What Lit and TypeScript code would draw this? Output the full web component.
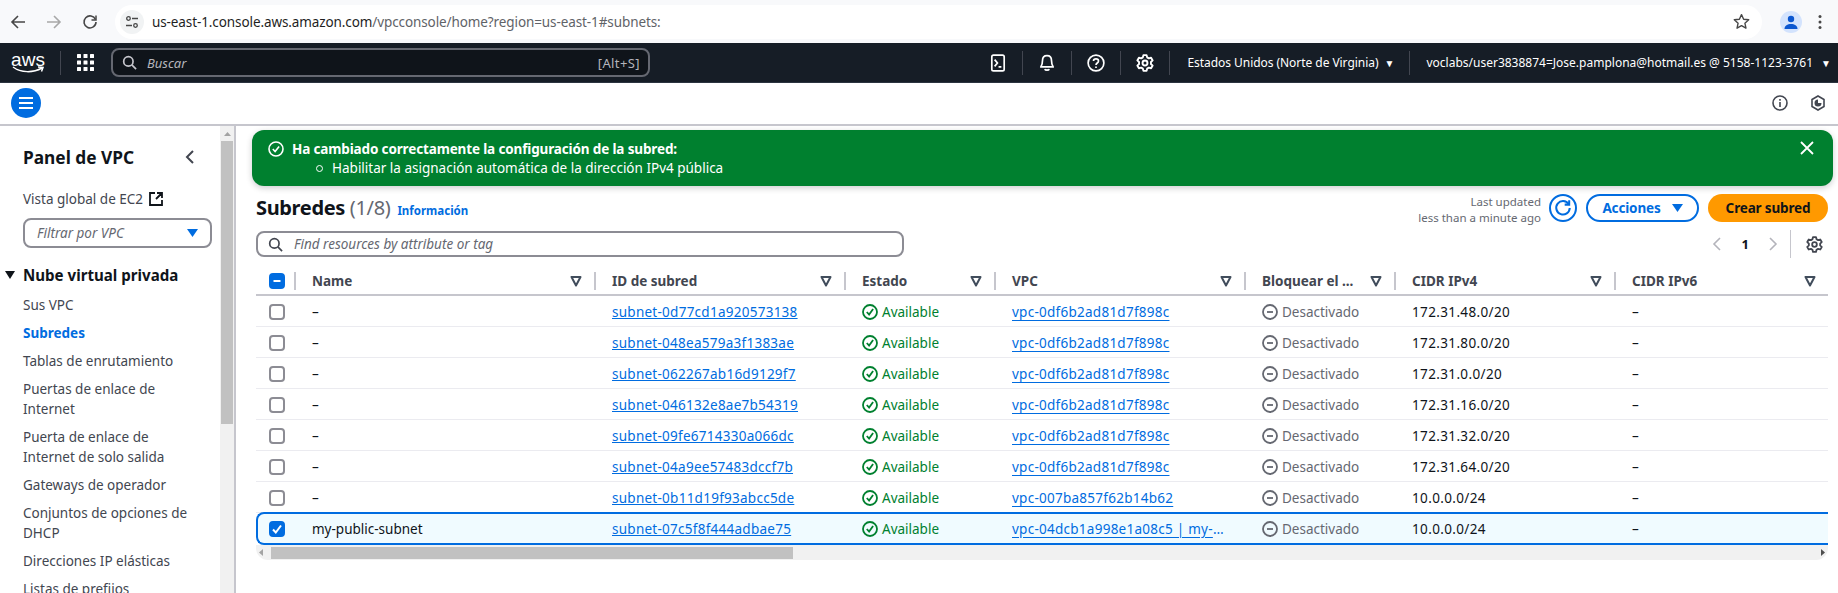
import { LitElement, html, svg, css } from 'lit';
import { customElement } from 'lit/decorators.js';

const gear = html`<svg viewBox="0 0 16 16" fill="none" stroke="currentColor" stroke-width="1.7" stroke-linejoin="round"><path d="M6.6 1h2.800l.5 2 1.500.9 2-.6 1.400 2.400-1.500 1.400v1.800l1.500 1.400-1.400 2.400-2-.6-1.500.9-.5 2H6.600l-.5-2-1.500-.9-2 .6-1.400-2.400 1.500-1.400V7.100L1.200 5.700l1.400-2.400 2 .6 1.500-.9z"/><circle cx="8" cy="8" r="2.200"/></svg>`;
const filterIcon = html`<svg class="filter" viewBox="0 0 12 12"><path d="M1.500 2h9L6 10.500z" fill="none" stroke="#414d5c" stroke-width="2" stroke-linejoin="round"/></svg>`;
const checkCircle = html`<svg class="stat" viewBox="0 0 16 16" fill="none" stroke="#00802f" stroke-width="1.800"><circle cx="8" cy="8" r="7"/><path d="M4.800 8l2.300 2.600 4-5.600"/></svg>`;
const minusCircle = html`<svg class="stat" viewBox="0 0 16 16" fill="none" stroke="#656871" stroke-width="1.800"><circle cx="8" cy="8" r="7"/><path d="M5 8h6"/></svg>`;
const searchIcon = html`<svg class="search-ic" viewBox="0 0 16 16" fill="none" stroke="currentColor" stroke-width="1.800"><circle cx="6.800" cy="6.800" r="5"/><path d="M10.500 10.500L15 15"/></svg>`;

interface Row {
  name: string;
  id: string;
  vpc: string;
  cidr: string;
}

const ROWS: Row[] = [
  { name: '–', id: 'subnet-0d77cd1a920573138', vpc: 'vpc-0df6b2ad81d7f898c', cidr: '172.31.48.0/20' },
  { name: '–', id: 'subnet-048ea579a3f1383ae', vpc: 'vpc-0df6b2ad81d7f898c', cidr: '172.31.80.0/20' },
  { name: '–', id: 'subnet-062267ab16d9129f7', vpc: 'vpc-0df6b2ad81d7f898c', cidr: '172.31.0.0/20' },
  { name: '–', id: 'subnet-046132e8ae7b54319', vpc: 'vpc-0df6b2ad81d7f898c', cidr: '172.31.16.0/20' },
  { name: '–', id: 'subnet-09fe6714330a066dc', vpc: 'vpc-0df6b2ad81d7f898c', cidr: '172.31.32.0/20' },
  { name: '–', id: 'subnet-04a9ee57483dccf7b', vpc: 'vpc-0df6b2ad81d7f898c', cidr: '172.31.64.0/20' },
  { name: '–', id: 'subnet-0b11d19f93abcc5de', vpc: 'vpc-007ba857f62b14b62', cidr: '10.0.0.0/24' },
  { name: 'my-public-subnet', id: 'subnet-07c5f8f444adbae75', vpc: 'vpc-04dcb1a998e1a08c5 | my-vpc', cidr: '10.0.0.0/24' },
];

const HEADERS = ['Name', 'ID de subred', 'Estado', 'VPC', 'Bloquear el ...', 'CIDR IPv4', 'CIDR IPv6'];

@customElement('app-root')
export class AppRoot extends LitElement {
  static styles = css`
    :host {
      display: block;
      width: 1838px;
      height: 593px;
      overflow: hidden;
      background: #fff;
      font-family: 'Noto Sans', sans-serif;
      font-size: 13.5px;
      color: #0f141a;
    }
    svg { display: block; flex: none; }

    /* browser chrome */
    .chrome {
      height: 43px;
      box-sizing: border-box;
      background: #f8f9fb;
      display: flex;
      align-items: center;
      color: #474747;
    }
    .chrome-btn { width: 36px; display: flex; justify-content: center; }
    .chrome-btn svg { width: 16px; height: 16px; }
    .pill {
      margin-left: 7px;
      width: 1647px;
      height: 34px;
      background: #fff;
      border-radius: 17px;
      display: flex;
      align-items: center;
      box-sizing: border-box;
      padding: 0 12px 0 5px;
    }
    .tune {
      width: 24px; height: 24px; border-radius: 50%;
      background: #f1f3f4;
      display: flex; align-items: center; justify-content: center;
      margin-right: 8px;
    }
    .tune svg { width: 14px; height: 14px; }
    .url { font-size: 13.500px; color: #1f1f1f; letter-spacing: -0.1px; flex: 1; }
    .url span { color: #5f6368; }
    .star { width: 17px; height: 17px; }
    .avatar {
      margin-left: 18px;
      width: 22px; height: 22px; border-radius: 50%;
      background: #d3e3fd;
      display: flex; align-items: center; justify-content: center;
    }
    .avatar svg { width: 16px; height: 16px; }
    .dots { margin-left: 16px; width: 4px; height: 16px; }

    /* aws top nav */
    .topnav {
      height: 40px;
      background: #161d26;
      border-bottom: 1px solid #2c3440;
      box-sizing: border-box;
      display: flex;
      align-items: center;
      color: #fff;
      font-size: 12px;
    }
    .logo {
      width: 32px;
      margin-left: 12px;
      display: flex;
      flex-direction: column;
      align-items: center;
      line-height: 15px;
      font-family: 'Liberation Sans', sans-serif;
      font-size: 19px;
    }
    .logo svg { width: 32px; height: 7px; margin-top: -1px; }
    .vsep { width: 1px; height: 24px; background: #424650; flex: none; }
    .logo + .vsep { margin-left: 16px; }
    .apps { width: 17px; height: 17px; margin: 0 17px 0 16px; }
    .nav-search {
      width: 539px;
      height: 29px;
      box-sizing: border-box;
      background: #0f141a;
      border: 2px solid #656871;
      border-radius: 8px;
      display: flex;
      align-items: center;
      padding: 0 8px;
      color: #b4b4bb;
      font-size: 13px;
    }
    .nav-search .search-ic { width: 15px; height: 15px; margin: 0 10px 0 1px; color: #c6c6cd; }
    .nav-search em { flex: 1; }
    .nav-search span { letter-spacing: 0.4px; }
    .nav-right { margin-left: auto; display: flex; align-items: center; padding-right: 7px; }
    .nav-ic { width: 48px; display: flex; justify-content: center; }
    .nav-ic svg { width: 18px; height: 18px; }
    .nav-text { display: flex; align-items: center; gap: 6px; white-space: nowrap; }
    .nav-text.region { margin: 0 17px 0 17px; width: 205px; }
    .nav-text.acct { margin-left: 16px; gap: 8px; }
    .nav-text i { font-style: normal; font-size: 10px; }
    .nav-text.acct span { letter-spacing: 0; }
    .nav-text.region span { letter-spacing: -0.05px; }

    /* sub bar */
    .subbar {
      height: 43px;
      box-sizing: border-box;
      border-bottom: 2px solid #c6c6cd;
      display: flex;
      align-items: center;
      padding: 0 12px 2px 11px;
      color: #424650;
    }
    .menu {
      width: 30px; height: 30px; border-radius: 50%;
      background: #006ce0;
      display: flex; align-items: center; justify-content: center;
      margin-right: auto;
    }
    .menu svg { width: 16px; height: 16px; }
    .sub-ic { width: 16px; height: 16px; margin-left: 22px; }

    /* page */
    .page { display: flex; height: 467px; overflow: hidden; }
    .side {
      width: 236px;
      flex: none;
      box-sizing: border-box;
      border-right: 2px solid #c6c6cd;
      display: flex;
      overflow: hidden;
    }
    .side-body { width: 220px; flex: none; padding: 18px 0 0 23px; box-sizing: border-box; color: #424650; }
    .side-head {
      display: flex;
      align-items: center;
      justify-content: space-between;
      padding-right: 24px;
      font-size: 17.300px;
      font-weight: 700;
      color: #0f141a;
      height: 26px;
    }
    .side-head svg { width: 12px; height: 14px; }
    .ec2 { display: flex; align-items: center; gap: 6px; margin-top: 19px; height: 20px; }
    .ec2 svg { width: 14px; height: 14px; }
    .side-filter {
      width: 189px;
      height: 30px;
      box-sizing: border-box;
      border: 2px solid #8c8c94;
      border-radius: 8px;
      margin-top: 9px;
      display: flex;
      align-items: center;
      justify-content: space-between;
      padding: 0 12px;
      font-style: italic;
      color: #656871;
    }
    .tri { width: 11px; height: 8px; }
    .side-section {
      display: flex;
      align-items: center;
      margin: 15px 0 0 -18px;
      font-size: 15.100px;
      font-weight: 700;
      color: #0f141a;
      height: 24px;
    }
    .side-section svg { width: 10px; height: 8px; margin-right: 8px; }
    .side-list { margin-top: 8px; display: flex; flex-direction: column; gap: 8px; line-height: 20px; width: 175px; }
    .side-list .on { color: #006ce0; font-weight: 700; }
    .vbar { width: 14px; flex: none; background: #f1f1f1; padding-top: 15px; box-sizing: border-box; }
    .vbar .thumb { width: 12px; margin-left: 1px; height: 283px; background: #c1c1c1; }
    .vbar .up { width: 7px; height: 4px; margin: -9px auto 5px; }

    /* content */
    .content { flex: 1; min-width: 0; padding: 4px 5px 0 16px; }
    .flash {
      height: 56px;
      box-sizing: border-box;
      background: #00802f;
      color: #fff;
      border-radius: 12px;
      box-shadow: 0 2px 6px rgba(0, 7, 22, 0.2);
      display: flex;
      padding: 10px 19px 0 16px;
      width: 1581px;
    }
    .flash .ok { width: 16px; height: 16px; margin: 1px 8px 0 0; }
    .flash b { display: block; line-height: 18px; letter-spacing: -0.14px; }
    .flash .li { display: flex; align-items: center; line-height: 20px; }
    .flash .li::before {
      content: '';
      width: 5px; height: 5px;
      border: 1px solid #fff;
      border-radius: 50%;
      margin: 0 9px 0 24px;
    }
    .flash .grow { flex: 1; }
    .flash .x { width: 14px; height: 14px; margin: 1px 0 0 0; }

    .inner { padding: 8px 5px 0 4px; }
    .head { display: flex; align-items: center; height: 28px; }
    .head h1 { margin: -2px 0 0; font-size: 20px; font-weight: 700; letter-spacing: -0.35px; }
    .head h1 span { font-weight: 400; color: #656871; }
    .info { color: #006ce0; font-size: 11.500px; font-weight: 700; margin-left: 7px; margin-top: 5px; }
    .updated { margin-left: auto; margin-top: 4px; text-align: right; font-size: 11.500px; line-height: 16px; color: #656871; }
    .refresh {
      width: 28px; height: 28px; box-sizing: border-box;
      border: 2px solid #006ce0; border-radius: 50%;
      margin: 0 9px 0 8px;
      display: flex; align-items: center; justify-content: center;
      color: #006ce0;
    }
    .refresh svg { width: 18px; height: 18px; }
    .btn {
      height: 28px;
      box-sizing: border-box;
      border-radius: 14px;
      display: flex;
      align-items: center;
      justify-content: center;
      font-weight: 700;
      letter-spacing: -0.15px;
    }
    .btn.ghost { width: 113px; border: 2px solid #006ce0; color: #006ce0; gap: 11px; }
    .btn.primary { width: 120px; background: #ff9900; margin-left: 9px; color: #0f141a; }

    .tools { display: flex; align-items: center; margin-top: 8px; height: 28px; }
    .find {
      width: 648px;
      height: 26px;
      box-sizing: border-box;
      border: 2px solid #8c8c94;
      border-radius: 8px;
      display: flex;
      align-items: center;
      padding: 0 10px;
      font-style: italic;
      color: #656871;
    }
    .find .search-ic { width: 15px; height: 15px; margin-right: 11px; color: #424650; }
    .pager { margin-left: auto; display: flex; align-items: center; }
    .pager .dis { width: 9px; height: 14px; color: #b4b4bb; }
    .pager b { font-size: 13px; margin: 0 20px 0 21px; }
    .pager .vsep { height: 28px; background: #c6c6cd; margin: 0 15px 0 12px; }
    .pager .g { width: 17px; height: 17px; color: #424650; margin-right: 5px; }

    .thead, .row {
      display: grid;
      grid-template-columns: 40px 300px 250px 150px 250px 150px 220px 212px;
      align-items: center;
    }
    .thead {
      height: 34px;
      margin-top: 4px;
      padding-bottom: 4px;
      align-items: end;
      border-bottom: 2px solid #c6c6cd;
      box-sizing: border-box;
      font-weight: 700;
      color: #424650;
    }
    .th {
      display: flex;
      align-items: center;
      padding-left: 16px;
      padding-right: 12px;
      height: 18px;
      justify-content: space-between;
      border-right: 2px solid #c6c6cd;
      box-sizing: border-box;
      white-space: nowrap;
    }
    .th:last-child { border-right: none; }
    .th.box { padding: 0 0 0 13px; }
    .filter { width: 12px; height: 12px; }
    .cbx {
      width: 16px; height: 16px; box-sizing: border-box;
      border: 2px solid #8c8c94; border-radius: 4px; background: #fff;
      display: flex; align-items: center; justify-content: center;
    }
    .cbx.on { background: #006ce0; border-color: #006ce0; }
    .cbx svg { width: 12px; height: 12px; }

    .row {
      height: 31px;
      padding-top: 2px;
      box-sizing: border-box;
      border-bottom: 1px solid #ebebf0;
    }
    .row.sel {
      height: 33px;
      margin-top: -1px;
      padding-top: 0;
      border: 2px solid #006ce0;
      border-right: none;
      border-radius: 8px 0 0 8px;
      background: #f0fbff;
      grid-template-columns: 38px 300px 250px 150px 250px 150px 220px 212px;
    }
    .td { padding-left: 16px; white-space: nowrap; overflow: hidden; }
    .td.box { padding-left: 13px; }
    .sel .td.box { padding-left: 11px; }
    .td a { color: #006ce0; text-decoration: underline; letter-spacing: 0.26px; }
    .td.cidr { letter-spacing: 0.36px; }
    .status { display: flex; align-items: center; gap: 4px; }
    .status.ok { color: #00802f; }
    .status.off { color: #656871; }
    .stat { width: 16px; height: 16px; }
    .vpc { padding-right: 21px; text-overflow: ellipsis; color: #006ce0; }
    .vpc a { text-underline-offset: 3px; }

    .hbar {
      height: 15px;
      background: #f1f1f1;
      border-radius: 0 0 12px 12px;
      display: flex;
      align-items: center;
      justify-content: space-between;
      padding: 0 3px;
    }
    .hbar .thumb { width: 522px; height: 12px; background: #c1c1c1; margin-left: 8px; margin-right: auto; }
    .hbar svg { width: 4px; height: 7px; }
  `;

  render() {
    return html`
      <div class="chrome">
        <div class="chrome-btn"><svg viewBox="0 0 16 16" fill="none" stroke="#474747" stroke-width="1.600"><path d="M15 8H2M8 2L2 8l6 6"/></svg></div>
        <div class="chrome-btn"><svg viewBox="0 0 16 16" fill="none" stroke="#a8a8a8" stroke-width="1.600"><path d="M1 8h13M8 2l6 6-6 6"/></svg></div>
        <div class="chrome-btn"><svg viewBox="0 0 16 16" fill="none" stroke="#474747" stroke-width="1.600"><path d="M13.500 5.500A6 6 0 1 0 14 8"/><path d="M14 1.500V6H9.500" stroke-width="1.500"/></svg></div>
        <div class="pill">
          <div class="tune"><svg viewBox="0 0 14 14" fill="none" stroke="#474747" stroke-width="1.300"><circle cx="3.500" cy="3.500" r="1.800"/><path d="M7 3.500h6M1 10.500h6"/><circle cx="10.500" cy="10.500" r="1.800"/></svg></div>
          <div class="url">us-east-1.console.aws.amazon.com<span>/vpcconsole/home?region=us-east-1#subnets:</span></div>
          <svg class="star" viewBox="0 0 16 16" fill="none" stroke="#474747" stroke-width="1.300" stroke-linejoin="round"><path d="M8 1.500l2 4.400 4.800.5-3.600 3.200 1 4.700L8 11.900l-4.200 2.400 1-4.700L1.200 6.400 6 5.900z"/></svg>
        </div>
        <div class="avatar"><svg viewBox="0 0 16 16" fill="#0b57d0"><circle cx="8" cy="5" r="3.200"/><path d="M1.500 15c0-3.500 3-5 6.500-5s6.500 1.500 6.500 5z"/></svg></div>
        <svg class="dots" viewBox="0 0 4 16" fill="#474747"><circle cx="2" cy="2.500" r="1.500"/><circle cx="2" cy="8" r="1.500"/><circle cx="2" cy="13.500" r="1.500"/></svg>
      </div>

      <div class="topnav">
        <div class="logo">aws<svg viewBox="0 0 32 7" fill="none" stroke="#fff" stroke-width="1.500"><path d="M1 1c8 6 20 6 29 1M26 1l5 .5-1.500 4"/></svg></div>
        <div class="vsep"></div>
        <svg class="apps" viewBox="0 0 17 17" fill="#fff">
          ${[0, 6.5, 13].map((y) => [0, 6.5, 13].map((x) => svg`<rect x=${x} y=${y} width="4" height="4" rx="0.500"></rect>`))}
        </svg>
        <div class="nav-search">${searchIcon}<em>Buscar</em><span>[Alt+S]</span></div>
        <div class="nav-right">
          <div class="nav-ic"><svg viewBox="0 0 16 16" fill="none" stroke="#fff" stroke-width="1.500"><rect x="2.500" y="1" width="11" height="14" rx="1.500"/><path d="M5 5l2.500 3L5 11M8.500 11.500h2.500"/></svg></div>
          <div class="vsep"></div>
          <div class="nav-ic"><svg viewBox="0 0 16 16" fill="none" stroke="#fff" stroke-width="1.500" stroke-linejoin="round"><path d="M8 1.500c-2.500 0-4 1.800-4 4.300 0 3-.5 4.200-1.500 5.700h11C12.500 10 12 8.800 12 5.800c0-2.500-1.500-4.300-4-4.300zM6 13.500c.5 1.200 3.500 1.200 4 0"/></svg></div>
          <div class="vsep"></div>
          <div class="nav-ic"><svg viewBox="0 0 16 16" fill="none" stroke="#fff" stroke-width="1.500"><circle cx="8" cy="8" r="7"/><path d="M5.800 6.200C5.800 3.800 10.200 3.800 10.200 6.200c0 1.800-2.200 1.800-2.200 3.600M8 11v1.500"/></svg></div>
          <div class="vsep"></div>
          <div class="nav-ic">${gear}</div>
          <div class="vsep"></div>
          <div class="nav-text region"><span>Estados Unidos (Norte de Virginia)</span><i>▼</i></div>
          <div class="vsep"></div>
          <div class="nav-text acct"><span>voclabs/user3838874=Jose.pamplona@hotmail.es @ 5158-1123-3761</span><i>▼</i></div>
        </div>
      </div>

      <div class="subbar">
        <div class="menu"><svg viewBox="0 0 16 16" stroke="#fff" stroke-width="2"><path d="M1 3h14M1 8h14M1 13h14"/></svg></div>
        <svg class="sub-ic" viewBox="0 0 16 16" fill="none" stroke="currentColor" stroke-width="1.600"><circle cx="8" cy="8" r="7"/><path d="M8 7v5M8 4v1.800"/></svg>
        <svg class="sub-ic" viewBox="0 0 16 16" fill="none" stroke="currentColor" stroke-width="1.600"><path d="M8 1l6 3.500v7L8 15l-6-3.500v-7z"/><path d="M8 4.500A3.500 3.500 0 1 0 11.500 8H8z" fill="currentColor" stroke="none"/></svg>
      </div>

      <div class="page">
        <aside class="side">
          <div class="side-body">
            <div class="side-head">Panel de VPC<svg viewBox="0 0 12 14" fill="none" stroke="#424650" stroke-width="2"><path d="M9 1L3 7l6 6"/></svg></div>
            <div class="ec2">Vista global de EC2<svg viewBox="0 0 14 14" fill="none" stroke="#0f141a" stroke-width="1.800"><path d="M6 1H1v12h12V8M8 1h5v5M13 1L7 7"/></svg></div>
            <div class="side-filter">Filtrar por VPC<svg class="tri" viewBox="0 0 11 8"><path d="M0 0h11L5.500 8z" fill="#006ce0"/></svg></div>
            <div class="side-section"><svg viewBox="0 0 10 8"><path d="M0 0h10L5 8z" fill="#0f141a"/></svg>Nube virtual privada</div>
            <div class="side-list">
              <div>Sus VPC</div>
              <div class="on">Subredes</div>
              <div>Tablas de enrutamiento</div>
              <div>Puertas de enlace de Internet</div>
              <div>Puerta de enlace de Internet de solo salida</div>
              <div>Gateways de operador</div>
              <div>Conjuntos de opciones de DHCP</div>
              <div>Direcciones IP elásticas</div>
              <div>Listas de prefijos</div>
            </div>
          </div>
          <div class="vbar">
            <svg class="up" viewBox="0 0 7 4"><path d="M0 4L3.500 0 7 4z" fill="#a3a3a3"/></svg>
            <div class="thumb"></div>
          </div>
        </aside>

        <main class="content">
          <div class="flash">
            <svg class="ok" viewBox="0 0 16 16" fill="none" stroke="#fff" stroke-width="1.600"><circle cx="8" cy="8" r="7"/><path d="M4.800 8l2.300 2.500 4-5"/></svg>
            <div>
              <b>Ha cambiado correctamente la configuración de la subred:</b>
              <div class="li">Habilitar la asignación automática de la dirección IPv4 pública</div>
            </div>
            <div class="grow"></div>
            <svg class="x" viewBox="0 0 14 14" fill="none" stroke="#fff" stroke-width="1.800"><path d="M1 1l12 12M13 1L1 13"/></svg>
          </div>

          <div class="inner">
            <div class="head">
              <h1>Subredes <span>(1/8)</span></h1>
              <span class="info">Información</span>
              <div class="updated">Last updated<br />less than a minute ago</div>
              <div class="refresh"><svg viewBox="0 0 16 16" fill="none" stroke="currentColor" stroke-width="1.800"><path d="M13 4.500A6 6 0 1 0 14 8"/><path d="M13.500 1v4H9.500"/></svg></div>
              <div class="btn ghost">Acciones<svg class="tri" viewBox="0 0 11 8"><path d="M0 0h11L5.500 8z" fill="#006ce0"/></svg></div>
              <div class="btn primary">Crear subred</div>
            </div>

            <div class="tools">
              <div class="find">${searchIcon}Find resources by attribute or tag</div>
              <div class="pager">
                <svg class="dis" viewBox="0 0 9 14" fill="none" stroke="currentColor" stroke-width="1.600"><path d="M8 1L2 7l6 6"/></svg>
                <b>1</b>
                <svg class="dis" viewBox="0 0 9 14" fill="none" stroke="currentColor" stroke-width="1.600"><path d="M1 1l6 6-6 6"/></svg>
                <div class="vsep"></div>
                <span class="g">${gear}</span>
              </div>
            </div>

            <div class="thead">
              <div class="th box"><div class="cbx on"><svg viewBox="0 0 12 12"><path d="M2.500 6h7" stroke="#fff" stroke-width="2"/></svg></div></div>
              ${HEADERS.map((h) => html`<div class="th"><span>${h}</span>${filterIcon}</div>`)}
            </div>

            ${ROWS.map((r, i) => this.renderRow(r, i === ROWS.length - 1))}

            <div class="hbar">
              <svg viewBox="0 0 4 7"><path d="M4 0L0 3.500 4 7z" fill="#a3a3a3"/></svg>
              <div class="thumb"></div>
              <svg viewBox="0 0 4 7"><path d="M0 0l4 3.500L0 7z" fill="#505050"/></svg>
            </div>
          </div>
        </main>
      </div>
    `;
  }

  private renderRow(r: Row, selected: boolean) {
    return html`
      <div class="row ${selected ? 'sel' : ''}">
        <div class="td box">
          <div class="cbx ${selected ? 'on' : ''}">
            ${selected ? html`<svg viewBox="0 0 12 12" fill="none"><path d="M2 6.500l2.800 3L10 2.500" stroke="#fff" stroke-width="2"/></svg>` : ''}
          </div>
        </div>
        <div class="td">${r.name}</div>
        <div class="td"><a>${r.id}</a></div>
        <div class="td"><div class="status ok">${checkCircle}Available</div></div>
        <div class="td vpc"><a>${r.vpc}</a></div>
        <div class="td"><div class="status off">${minusCircle}Desactivado</div></div>
        <div class="td cidr">${r.cidr}</div>
        <div class="td">–</div>
      </div>
    `;
  }
}

declare global {
  interface HTMLElementTagNameMap {
    'app-root': AppRoot;
  }
}
